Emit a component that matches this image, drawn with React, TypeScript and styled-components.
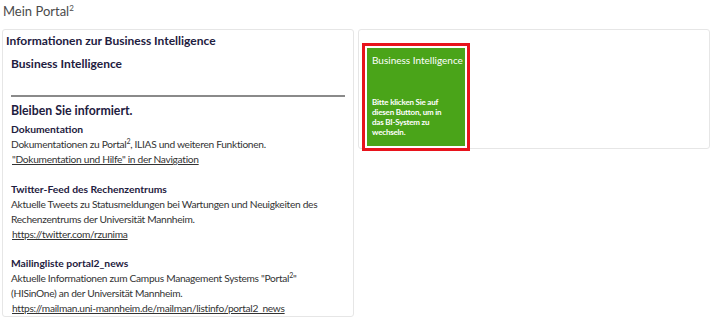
import React from "react";
import styled, { createGlobalStyle } from "styled-components";

const Global = createGlobalStyle`
  html, body { margin: 0; padding: 0; background: #fff; }
  body { font-family: Lato, "Open Sans", sans-serif; color: #333; }
  * { box-sizing: border-box; }
`;

const Page = styled.div`
  width: 720px;
  padding: 1px 10px 0 2px;
`;

const Title = styled.h1`
  margin: 0 0 8px 1px;
  font-size: 13px;
  font-weight: 400;
  color: #4a4a4a;
  line-height: 20px;
  sup { font-size: 8px; line-height: 0; vertical-align: 5px; }
`;

const Columns = styled.div`
  display: grid;
  grid-template-columns: 352px 352px;
  column-gap: 4px;
  align-items: start;
`;

const Panel = styled.section<{ $pad?: string; $h?: number }>`
  border: 1px solid #e6e6e6;
  border-radius: 3px;
  padding: ${(p) => p.$pad || "2px 4px 0 3px"};
  height: ${(p) => (p.$h ? `${p.$h}px` : "auto")};
  background: #fff;
`;

const PanelTitle = styled.h2`
  margin: 0;
  font-size: 12px;
  font-weight: 700;
  color: #1e2040;
  line-height: 17px;
`;

const Inner = styled.div`
  padding: 0 4px 0 5px;
`;

const SubTitle = styled.h3`
  margin: 6px 0 0 0;
  font-size: 12px;
  font-weight: 700;
  color: #1e2040;
  line-height: 17px;
`;

const Rule = styled.hr`
  margin: 23px 0 5px 0;
  border: 0;
  border-top: 2px solid #8a8a8a;
`;

const InfoTitle = styled.h3`
  margin: 0 0 3px 0;
  font-size: 12.3px;
  font-weight: 700;
  color: #1e2040;
  line-height: 17px;
`;

const Block = styled.div`
  font-size: 10.2px;
  line-height: 15px;
  margin-bottom: 14.5px;
  &:last-child { margin-bottom: 0; }
`;

const BlockTitle = styled.div`
  font-size: 10.3px;
  font-weight: 700;
  color: #1e2040;
  line-height: 15px;
`;

const Text = styled.div`
  font-size: 10.2px;
  letter-spacing: -0.3px;
  line-height: 15px;
  color: #333;
  sup { font-size: 7px; line-height: 0; vertical-align: 4px; }
`;

const Link = styled.a`
  display: block;
  font-size: 10.2px;
  letter-spacing: -0.3px;
  line-height: 15px;
  color: #333;
  text-decoration: underline;
  margin-left: 1px;
`;

const Frame = styled.div`
  width: 108px;
  margin: 13px 0 0 3px;
  border: 3px solid #e8131c;
  padding: 2px;
  background: #fff;
`;

const Tile = styled.a`
  display: flex;
  flex-direction: column;
  justify-content: space-between;
  height: 98px;
  background: #4aa419;
  color: #fff;
  padding: 5px 4px 9px 5px;
  text-decoration: none;
`;

const TileTitle = styled.div`
  font-size: 10px;
  line-height: 14px;
  font-weight: 400;
  white-space: nowrap;
`;

const TileText = styled.div`
  max-width: 72px;
  font-size: 8px;
  letter-spacing: -0.2px;
  line-height: 10px;
  font-weight: 700;
`;

export default function App() {
  return (
    <Page>
      <Global />
      <Title>
        Mein Portal<sup>2</sup>
      </Title>
      <Columns>
        <Panel>
          <PanelTitle>Informationen zur Business Intelligence</PanelTitle>
          <Inner>
            <SubTitle>Business Intelligence</SubTitle>
            <Rule />
            <InfoTitle>Bleiben Sie informiert.</InfoTitle>
            <Block>
              <BlockTitle>Dokumentation</BlockTitle>
              <Text>
                Dokumentationen zu Portal<sup>2</sup>, ILIAS und weiteren Funktionen.
              </Text>
              <Link href="#">"Dokumentation und Hilfe" in der Navigation</Link>
            </Block>
            <Block>
              <BlockTitle>Twitter-Feed des Rechenzentrums</BlockTitle>
              <Text>
                Aktuelle Tweets zu Statusmeldungen bei Wartungen und Neuigkeiten des
                Rechenzentrums der Universität Mannheim.
              </Text>
              <Link href="#">https://twitter.com/rzunima</Link>
            </Block>
            <Block>
              <BlockTitle>Mailingliste portal2_news</BlockTitle>
              <Text>
                Aktuelle Informationen zum Campus Management Systems "Portal<sup>2</sup>"
                <br />
                (HISinOne) an der Universität Mannheim.
              </Text>
              <Link href="#">https://mailman.uni-mannheim.de/mailman/listinfo/portal2_news</Link>
            </Block>
          </Inner>
        </Panel>
        <Panel $pad="0" $h={120}>
          <Frame>
            <Tile href="#">
              <TileTitle>Business Intelligence</TileTitle>
              <TileText>
                Bitte klicken Sie auf diesen Button, um in das BI-System zu wechseln.
              </TileText>
            </Tile>
          </Frame>
        </Panel>
      </Columns>
    </Page>
  );
}
